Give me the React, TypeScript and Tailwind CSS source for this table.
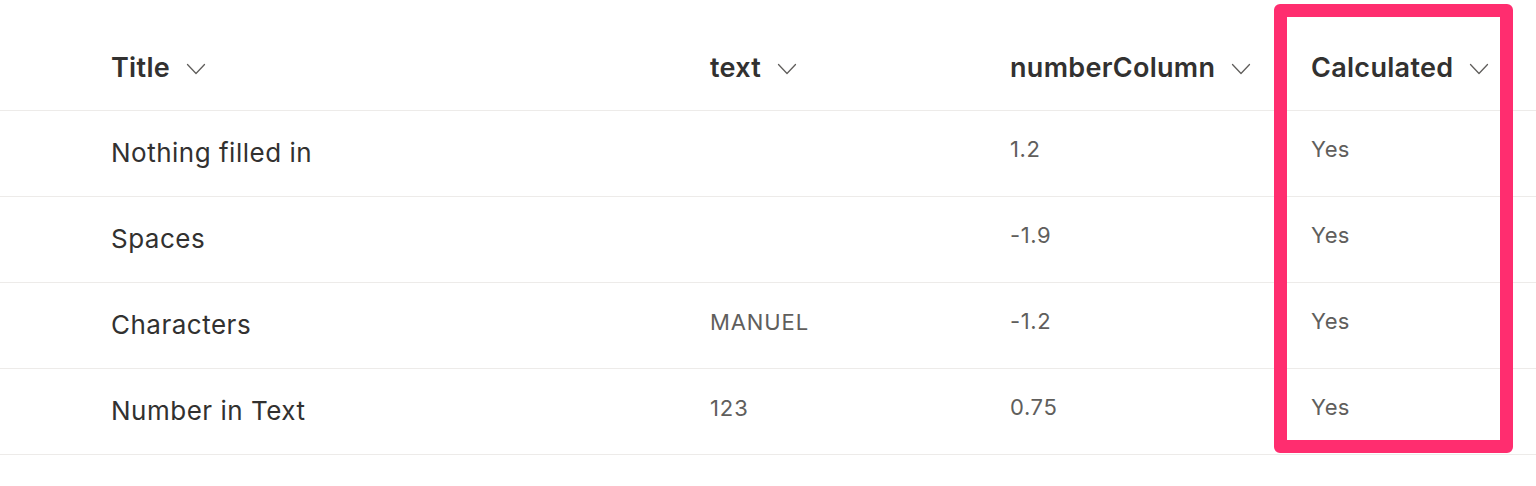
import React from "react";

type Row = { title: string; text: string; num: string; calc: string };

const rows: Row[] = [
  { title: "Nothing filled in", text: "", num: "1.2", calc: "Yes" },
  { title: "Spaces", text: "", num: "-1.9", calc: "Yes" },
  { title: "Characters", text: "MANUEL", num: "-1.2", calc: "Yes" },
  { title: "Number in Text", text: "123", num: "0.75", calc: "Yes" },
];

const Chevron: React.FC = () => (
  <svg width="20" height="12" viewBox="0 0 20 12" className="shrink-0">
    <polyline
      points="1.5,1.5 10,10.5 18.5,1.5"
      fill="none"
      stroke="#605e5c"
      strokeWidth="1.3"
      strokeLinecap="round"
      strokeLinejoin="round"
    />
  </svg>
);

const HeaderCell: React.FC<{ label: string; className: string }> = ({ label, className }) => (
  <div className={`flex items-center gap-[16px] ${className}`}>
    <span className="text-[27px] font-semibold text-[#323130] tracking-[0.3px]">{label}</span>
    <Chevron />
  </div>
);

export default function App() {
  return (
    <div
      className="relative w-[1536px] h-[486px] bg-white overflow-hidden"
      style={{ fontFamily: "Inter, 'Open Sans', sans-serif" }}
    >
      <div className="pt-[24px]">
        {/* Header */}
        <div className="flex h-[87px] items-center border-b border-[#edebe9] pt-[3px]">
          <HeaderCell label="Title" className="pl-[111px] w-[710px]" />
          <HeaderCell label="text" className="w-[300px]" />
          <HeaderCell label="numberColumn" className="w-[301px]" />
          <HeaderCell label="Calculated" className="flex-1" />
        </div>

        {rows.map((r) => (
          <div key={r.title} className="flex h-[86px] items-center border-b border-[#edebe9]">
            <div className="pl-[111px] w-[710px] text-[26px] text-[#323130] tracking-[0.5px] pb-[2px]">{r.title}</div>
            <div className="w-[300px] text-[22px] text-[#605e5c] tracking-[0.9px] pb-[6px]">{r.text}</div>
            <div className="w-[301px] text-[22px] text-[#605e5c] tracking-[0.6px] pb-[8px]">{r.num}</div>
            <div className="flex-1 text-[22px] text-[#605e5c] tracking-[0.4px] pb-[8px]">{r.calc}</div>
          </div>
        ))}
      </div>

      {/* highlight annotation */}
      <div className="absolute left-[1274px] top-[4px] w-[239px] h-[449px] border-[13px] border-[#ff2d6f] rounded-[6px] pointer-events-none" />
    </div>
  );
}
